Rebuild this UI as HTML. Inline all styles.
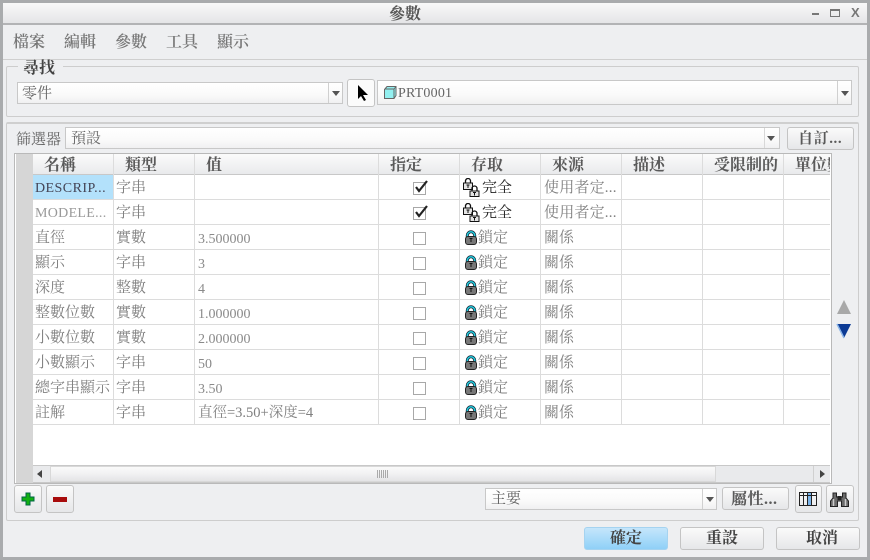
<!DOCTYPE html>
<html><head><meta charset="utf-8"><style>
html,body{margin:0;padding:0;width:870px;height:560px;overflow:hidden;background:#eeeff1}
*{box-sizing:border-box}
.a,.t,svg.i{position:absolute}
.t{white-space:nowrap;font-family:"Liberation Serif","Noto Serif CJK SC",serif;font-size:15px;line-height:20px;color:#808080;margin-top:3px}
.l{font-size:14px;margin-top:5px;color:#8a8a8a}
.h{font-weight:700;color:#5a5a5a;font-size:16px}
.m{font-size:16px;color:#777;font-weight:600}
.b{position:absolute;border:1px solid #c4c4c4;border-radius:3px;background:linear-gradient(#fafafa,#e6e7e9)}
.f{position:absolute;border:1px solid #c8c8c8;background:linear-gradient(#fff,#fafafa 60%,#f0f0f1)}
.v{position:absolute;top:154px;width:1px;height:271px;background:#dcdcdc}
.r{position:absolute;left:33px;width:797px;height:1px;background:#dcdcdc}
.c{position:absolute;left:413px;width:13px;height:13px;border:1px solid #a8a8a8;background:#fff}
.ar{position:absolute;width:0;height:0;border-left:4px solid transparent;border-right:4px solid transparent;border-top:5px solid #555}
</style></head><body>
<svg width="0" height="0" style="position:absolute"><defs>
<symbol id="lk" viewBox="0 0 14 15"><path d="M3.300 7V5.500a3.700 3.700 0 0 1 7.400 0V7" fill="none" stroke="#123" stroke-width="3"/><path d="M3.300 7V5.500a3.700 3.700 0 0 1 7.400 0V7" fill="none" stroke="#2cd" stroke-width="1.500"/><rect x="1.500" y="6.500" width="11" height="8" rx="2.500" fill="#777" stroke="#222"/><path d="M5.500 8.500h3M7 8.500v3.500" stroke="#111"/></symbol>
<symbol id="lk2" viewBox="0 0 19 19"><path d="M2.500 5V3a2.500 2.500 0 0 1 5 0v2" fill="none" stroke="#111" stroke-width="1.300"/><rect x=".5" y="5" width="9" height="6.500" fill="#e4e4e4" stroke="#111"/><path d="M5 6.500v3.500M3.500 7h3" stroke="#111"/><path d="M9 13v-2.500a2.500 2.500 0 0 1 5 0V13" fill="none" stroke="#111" stroke-width="1.300"/><rect x="7" y="13" width="9" height="5.500" fill="#e4e4e4" stroke="#111"/><path d="M11.500 14v3.500M10 14.500h3" stroke="#111"/></symbol>
</defs></svg>
<div class="a" style="left:0;top:0;width:870px;height:560px;border:3px solid #a9abad"></div>
<div class="a" style="left:3px;top:3px;width:864px;height:21px;background:linear-gradient(#f9f9f9,#e3e4e6)"></div>
<div class="a" style="left:3px;top:23px;width:864px;height:2px;background:#b2b3b5"></div>
<div class="t h" style="left:389px;top:2px;color:#555">參數</div>
<div class="a" style="left:812px;top:13px;width:7px;height:2px;background:#777"></div>
<div class="a" style="left:830px;top:9px;width:10px;height:8px;border:1px solid #777;border-top-width:2px"></div>
<div class="t" style="left:851px;top:0;font:700 13px/20px 'Liberation Sans',sans-serif;color:#777">X</div>

<div class="t m" style="left:13px;top:30px">檔案</div>
<div class="t m" style="left:64px;top:30px">編輯</div>
<div class="t m" style="left:115px;top:30px">參數</div>
<div class="t m" style="left:166px;top:30px">工具</div>
<div class="t m" style="left:217px;top:30px">顯示</div>
<div class="a" style="left:3px;top:59px;width:864px;height:1px;background:#cfcfcf"></div>

<!-- find group -->
<div class="a" style="left:6px;top:66px;width:853px;height:51px;border:1px solid #cdcdcd;border-radius:2px"></div>
<div class="a" style="left:18px;top:60px;width:45px;height:14px;background:#eeeff1"></div>
<div class="t h" style="left:23px;top:56px;color:#444">尋找</div>
<div class="f" style="left:17px;top:82px;width:326px;height:22px"></div>
<div class="a" style="left:328px;top:83px;width:1px;height:20px;background:#d0d0d0"></div>
<div class="ar" style="left:332px;top:91px"></div>
<div class="t" style="left:22px;top:81px;color:#666">零件</div>
<div class="b" style="left:347px;top:79px;width:28px;height:28px;background:#fbfbfb"></div>
<svg class="i" style="left:357px;top:85px" width="12" height="16" viewBox="0 0 12 16"><path d="M1 0v14l3-3 3 5 2-1-3-5h5z" fill="#000"/></svg>
<div class="f" style="left:377px;top:80px;width:475px;height:25px"></div>
<div class="a" style="left:837px;top:81px;width:1px;height:23px;background:#d0d0d0"></div>
<div class="ar" style="left:841px;top:91px"></div>
<svg class="i" style="left:384px;top:86px" width="13" height="13" viewBox="0 0 13 13"><path d="M.5 3.500 3 .5h9v9L10 12.500H.5z" fill="#93f0f0" stroke="#666"/><path d="M.5 3H10v9.500M10 3l2-2.500" fill="none" stroke="#666"/></svg>
<div class="t" style="left:398px;top:81px;color:#666;font-size:14px;letter-spacing:.2px">PRT0001</div>

<!-- main group -->
<div class="a" style="left:6px;top:122px;width:853px;height:399px;border:1px solid #cdcdcd;border-top:2px solid #cfcfcf;border-radius:2px"></div>
<div class="t" style="left:16px;top:127px;color:#666">篩選器</div>
<div class="f" style="left:65px;top:127px;width:715px;height:22px"></div>
<div class="a" style="left:764px;top:128px;width:1px;height:20px;background:#d8d8d8"></div>
<div class="ar" style="left:767px;top:136px"></div>
<div class="t" style="left:71px;top:126px;color:#666">預設</div>
<div class="b" style="left:787px;top:127px;width:67px;height:23px"></div>
<div class="t h" style="left:798px;top:126px;font-size:15px;letter-spacing:.6px">自訂...</div>

<!-- table -->
<div class="a" style="left:14px;top:153px;width:818px;height:331px;border:1px solid #b9b9b9;background:#fff"></div>
<div class="a" style="left:16px;top:154px;width:17px;height:329px;background:#d6d6d6"></div>
<div class="a" style="left:33px;top:154px;width:797px;height:20px;background:linear-gradient(#fbfbfb,#e9eaec)"></div>
<div class="r" style="top:174px;background:#c8c8c8"></div>
<div class="a" style="left:33px;top:175px;width:80px;height:24px;background:#b3e1fb"></div>
<div class="r" style="top:199px"></div><div class="r" style="top:224px"></div><div class="r" style="top:249px"></div><div class="r" style="top:274px"></div><div class="r" style="top:299px"></div><div class="r" style="top:324px"></div><div class="r" style="top:349px"></div><div class="r" style="top:374px"></div><div class="r" style="top:399px"></div><div class="r" style="top:424px"></div>
<div class="v" style="left:113px"></div><div class="v" style="left:194px"></div><div class="v" style="left:378px"></div><div class="v" style="left:459px"></div><div class="v" style="left:540px"></div><div class="v" style="left:621px"></div><div class="v" style="left:702px"></div><div class="v" style="left:783px"></div>

<div class="t h" style="left:44px;top:153px">名稱</div>
<div class="t h" style="left:125px;top:153px">類型</div>
<div class="t h" style="left:206px;top:153px">值</div>
<div class="t h" style="left:390px;top:153px">指定</div>
<div class="t h" style="left:471px;top:153px">存取</div>
<div class="t h" style="left:552px;top:153px">來源</div>
<div class="t h" style="left:633px;top:153px">描述</div>
<div class="t h" style="left:714px;top:153px">受限制的</div>
<div class="a" style="left:784px;top:154px;width:46px;height:20px;overflow:hidden"><div class="t h" style="left:11px;top:-1px">單位數</div></div>

<div class="t" style="left:35px;top:176px;color:#445;font-size:14px;letter-spacing:.45px">DESCRIP...</div>
<div class="t" style="left:35px;top:201px;font-size:14px;color:#999;letter-spacing:.3px">MODELE...</div>
<div class="t" style="left:35px;top:225px">直徑</div>
<div class="t" style="left:35px;top:250px">顯示</div>
<div class="t" style="left:35px;top:275px">深度</div>
<div class="t" style="left:35px;top:300px">整數位數</div>
<div class="t" style="left:35px;top:325px">小數位數</div>
<div class="t" style="left:35px;top:350px">小數顯示</div>
<div class="t" style="left:35px;top:375px">總字串顯示</div>
<div class="t" style="left:35px;top:400px">註解</div>

<div class="t" style="left:116px;top:175px">字串</div>
<div class="t" style="left:116px;top:200px">字串</div>
<div class="t" style="left:116px;top:225px">實數</div>
<div class="t" style="left:116px;top:250px">字串</div>
<div class="t" style="left:116px;top:275px">整數</div>
<div class="t" style="left:116px;top:300px">實數</div>
<div class="t" style="left:116px;top:325px">實數</div>
<div class="t" style="left:116px;top:350px">字串</div>
<div class="t" style="left:116px;top:375px">字串</div>
<div class="t" style="left:116px;top:400px">字串</div>

<div class="t l" style="left:198px;top:225px">3.500000</div>
<div class="t l" style="left:198px;top:250px">3</div>
<div class="t l" style="left:198px;top:275px">4</div>
<div class="t l" style="left:198px;top:300px">1.000000</div>
<div class="t l" style="left:198px;top:325px">2.000000</div>
<div class="t l" style="left:198px;top:350px">50</div>
<div class="t l" style="left:198px;top:375px">3.50</div>
<div class="t" style="left:198px;top:400px;font-size:14.5px">直徑=3.50+深度=4</div>

<!-- checks -->
<div class="c" style="top:182px"></div><div class="c" style="top:207px"></div><div class="c" style="top:232px"></div><div class="c" style="top:257px"></div><div class="c" style="top:282px"></div><div class="c" style="top:307px"></div><div class="c" style="top:332px"></div><div class="c" style="top:357px"></div><div class="c" style="top:382px"></div><div class="c" style="top:407px"></div>
<svg class="i" style="left:413px;top:178px" width="16" height="16" viewBox="0 0 16 16"><path d="M3 9l3 4 8-10" fill="none" stroke="#222" stroke-width="2.200"/></svg>
<svg class="i" style="left:413px;top:203px" width="16" height="16" viewBox="0 0 16 16"><path d="M3 9l3 4 8-10" fill="none" stroke="#222" stroke-width="2.200"/></svg>

<!-- access -->
<svg class="i" style="left:463px;top:178px" width="19" height="19"><use href="#lk2"/></svg>
<svg class="i" style="left:463px;top:203px" width="19" height="19"><use href="#lk2"/></svg>
<div class="t" style="left:482px;top:175px;color:#222">完全</div>
<div class="t" style="left:482px;top:200px;color:#222">完全</div>

<svg class="i" style="left:464px;top:230px" width="14" height="15"><use href="#lk"/></svg>
<svg class="i" style="left:464px;top:255px" width="14" height="15"><use href="#lk"/></svg>
<svg class="i" style="left:464px;top:280px" width="14" height="15"><use href="#lk"/></svg>
<svg class="i" style="left:464px;top:305px" width="14" height="15"><use href="#lk"/></svg>
<svg class="i" style="left:464px;top:330px" width="14" height="15"><use href="#lk"/></svg>
<svg class="i" style="left:464px;top:355px" width="14" height="15"><use href="#lk"/></svg>
<svg class="i" style="left:464px;top:380px" width="14" height="15"><use href="#lk"/></svg>
<svg class="i" style="left:464px;top:405px" width="14" height="15"><use href="#lk"/></svg>
<div class="t" style="left:478px;top:225px">鎖定</div><div class="t" style="left:478px;top:250px">鎖定</div><div class="t" style="left:478px;top:275px">鎖定</div><div class="t" style="left:478px;top:300px">鎖定</div><div class="t" style="left:478px;top:325px">鎖定</div><div class="t" style="left:478px;top:350px">鎖定</div><div class="t" style="left:478px;top:375px">鎖定</div><div class="t" style="left:478px;top:400px">鎖定</div>

<div class="t" style="left:544px;top:175px;letter-spacing:.2px">使用者定...</div>
<div class="t" style="left:544px;top:200px;letter-spacing:.2px">使用者定...</div>
<div class="t" style="left:544px;top:225px">關係</div><div class="t" style="left:544px;top:250px">關係</div><div class="t" style="left:544px;top:275px">關係</div><div class="t" style="left:544px;top:300px">關係</div><div class="t" style="left:544px;top:325px">關係</div><div class="t" style="left:544px;top:350px">關係</div><div class="t" style="left:544px;top:375px">關係</div><div class="t" style="left:544px;top:400px">關係</div>

<!-- scrollbar -->
<div class="a" style="left:33px;top:465px;width:797px;height:18px;background:#e9eaec;border-top:1px solid #c8c8c8;border-bottom:1px solid #c8c8c8"></div>
<div class="a" style="left:50px;top:466px;width:666px;height:16px;background:linear-gradient(#fafafa,#f1f1f2 50%,#e4e4e6);border:1px solid #d8d8d8"></div>
<div class="a" style="left:377px;top:470px;width:11px;height:8px;background:repeating-linear-gradient(90deg,#aaa 0 1px,transparent 1px 2px)"></div>
<div class="a" style="left:37px;top:470px;width:0;height:0;border-top:4px solid transparent;border-bottom:4px solid transparent;border-right:5px solid #444"></div>
<div class="a" style="left:820px;top:470px;width:0;height:0;border-top:4px solid transparent;border-bottom:4px solid transparent;border-left:5px solid #444"></div>
<div class="a" style="left:813px;top:466px;width:1px;height:16px;background:#d0d0d0"></div>

<!-- updown -->
<svg class="i" style="left:836px;top:298px" width="16" height="42" viewBox="0 0 16 42"><path d="M8 2 1 16h14z" fill="#a8a8a8"/><path d="M1 26h14L8 40z" fill="#0c3a94"/><path d="M1 26l7 14" stroke="#8ab4e8" stroke-width="1.500"/></svg>

<!-- bottom buttons -->
<div class="b" style="left:14px;top:485px;width:28px;height:28px"></div>
<div class="b" style="left:46px;top:485px;width:28px;height:28px"></div>
<svg class="i" style="left:21px;top:492px" width="14" height="14" viewBox="0 0 14 14"><path d="M5 1h4v4h4v4H9v4H5V9H1V5h4z" fill="#12b012" stroke="#064"/></svg>
<div class="a" style="left:53px;top:497px;width:14px;height:5px;background:#a80c0c"></div>
<div class="f" style="left:485px;top:488px;width:232px;height:22px"></div>
<div class="a" style="left:702px;top:489px;width:1px;height:20px;background:#d0d0d0"></div>
<div class="ar" style="left:706px;top:497px"></div>
<div class="t" style="left:491px;top:486px;color:#666">主要</div>
<div class="b" style="left:722px;top:487px;width:67px;height:23px"></div>
<div class="t h" style="left:731px;top:487px;letter-spacing:.5px">屬性...</div>
<div class="b" style="left:795px;top:485px;width:27px;height:28px"></div>
<div class="b" style="left:826px;top:485px;width:28px;height:28px"></div>
<svg class="i" style="left:799px;top:492px" width="18" height="14" viewBox="0 0 18 14"><rect x="8" y="0" width="5" height="14" fill="#7ab4ea"/><path d="M.5.500h17v13H.500zM.5 3.500h17M4.500 .5v13M8.500 .5v13M12.500 .5v13" fill="none" stroke="#222"/></svg>
<svg class="i" style="left:830px;top:492px" width="19" height="15" viewBox="0 0 19 15"><path d="M3 1h3.500v4h6V1H16v5l2.500 3v5.500h-7V9h-4v5.500H.5V9L3 6z" fill="#6a6a6a" stroke="#222"/><path d="M3.500 7v7M15.500 7v7" stroke="#ccc" stroke-width="1.500"/><rect x="7.500" y="4" width="4" height="4" fill="#222"/></svg>

<!-- dialog buttons -->
<div class="b" style="left:584px;top:527px;width:84px;height:23px;background:linear-gradient(#c5e6fb,#8fd0f7);border-color:#a5d3f0"></div>
<div class="t h" style="left:610px;top:526px;color:#444">確定</div>
<div class="b" style="left:680px;top:527px;width:84px;height:23px"></div>
<div class="t h" style="left:706px;top:526px;color:#444">重設</div>
<div class="b" style="left:776px;top:527px;width:84px;height:23px"></div>
<div class="t h" style="left:806px;top:526px;color:#444">取消</div>
</body></html>
